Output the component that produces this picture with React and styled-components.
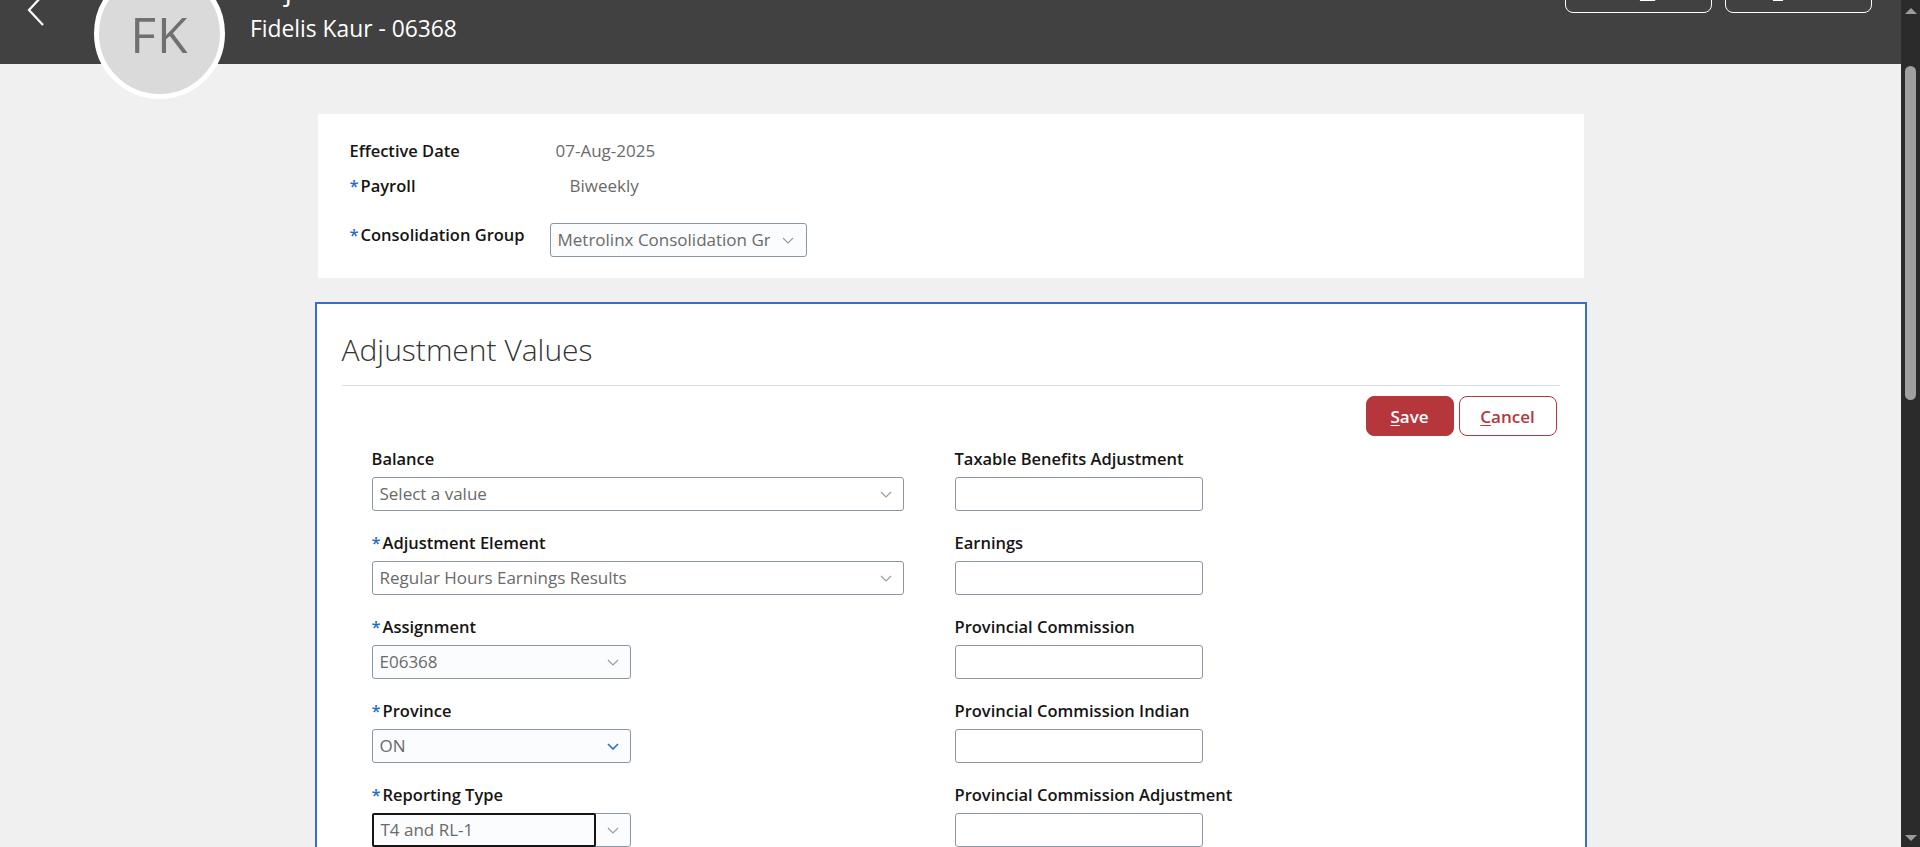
import React from 'react';
import styled, { createGlobalStyle } from 'styled-components';

const GlobalStyle = createGlobalStyle`
  html, body {
    margin: 0;
    padding: 0;
    height: 100%;
    overflow: hidden;
  }
  body {
    font-family: "Open Sans", "Noto Sans", sans-serif;
    background: #f0f0f0;
    color: #161513;
  }
  * { box-sizing: border-box; }
`;

const Viewport = styled.div`
  display: flex;
  width: 1920px;
  height: 847px;
  overflow: hidden;
`;

const Main = styled.div`
  flex: 1;
  min-width: 0;
  display: flex;
  flex-direction: column;
  overflow: hidden;
`;

/* ---------- fake window scrollbar ---------- */

const ScrollTrack = styled.div`
  width: 19px;
  flex-shrink: 0;
  background: #2b2b2b;
  display: flex;
  flex-direction: column;
  align-items: center;
  padding-top: 8px;
`;

const Arrow = styled.div`
  width: 0;
  height: 0;
  border-left: 6px solid transparent;
  border-right: 6px solid transparent;
  border-bottom: 6px solid #9b9b9b;
  ${(p) => p.$down && 'border-bottom: 0; border-top: 6px solid #9b9b9b; margin-top: auto; margin-bottom: 6px;'}
`;

const Thumb = styled.div`
  width: 11px;
  height: 334px;
  margin-top: 52px;
  border-radius: 6px;
  background: #a0a0a0;
`;

/* ---------- header ---------- */

const Header = styled.header`
  flex-shrink: 0;
  height: 104px;
  margin-top: -40px;
  background: #414141;
  display: flex;
  align-items: flex-start;
  padding: 0 29px 0 27px;
  position: relative;
  z-index: 2;
`;

const BackButton = styled.div`
  margin-top: 34px;
  width: 18px;
  height: 32px;
  color: #fff;
`;

const Avatar = styled.div`
  margin-top: 8px;
  margin-left: 49px;
  width: 131px;
  height: 131px;
  flex-shrink: 0;
  border-radius: 50%;
  border: 5px solid #fff;
  background: #dadada;
  color: #707070;
  font-size: 50px;
  display: flex;
  align-items: center;
  justify-content: center;
  letter-spacing: 1px;
`;

const TitleBlock = styled.div`
  margin-left: 25px;
  margin-top: 12px;
  display: flex;
  flex-direction: column;
  color: #fff;
`;

const PageTitle = styled.div`
  font-size: 28px;
  line-height: 34px;
`;

const PersonName = styled.div`
  margin-top: 8px;
  font-size: 22.8px;
  line-height: 30px;
`;

const HeaderActions = styled.div`
  margin-left: auto;
  margin-top: 17px;
  display: flex;
  gap: 13px;
`;

const GhostButton = styled.div`
  width: 147px;
  height: 36px;
  padding-bottom: 9px;
  border: 1px solid #fff;
  border-radius: 8px;
  color: #fff;
  font-size: 16px;
  font-weight: 600;
  display: flex;
  align-items: center;
  justify-content: center;
`;

const Key = styled.span`
  text-decoration: underline;
  text-underline-offset: ${(p) => p.$offset || 2}px;
`;

/* ---------- body ---------- */

const Content = styled.div`
  display: flex;
  flex-direction: column;
  align-items: center;
  padding-top: 50px;
  gap: 24px;
`;

const SummaryCard = styled.section`
  width: 1266px;
  height: 164px;
  background: #fff;
  padding: 27px 32px 0;
  display: grid;
  grid-template-columns: 200px 1fr;
  grid-template-rows: 35px 47px auto;
  align-items: start;
`;

const Label = styled.div`
  font-size: 16.5px;
  font-weight: 600;
  line-height: 20px;
  color: #161513;
  white-space: nowrap;
`;

const Req = styled.span`
  color: #1f6fc5;
  margin-right: 2px;
`;

const ReadValue = styled.div`
  font-size: 17px;
  line-height: 20px;
  color: #6a6a6a;
  padding-left: ${(p) => p.$indent || 6}px;
`;

const FormCard = styled.section`
  width: 1272px;
  flex-shrink: 0;
  background: #fff;
  border: 2px solid #3b6ec2;
  padding: 0 25px 40px;
`;

const CardTitle = styled.h2`
  margin: 0;
  padding: 26px 0 15px;
  font-size: 30px;
  font-weight: 300;
  line-height: 40px;
  color: #333;
  border-bottom: 1px solid #d6dfe7;
`;

const ButtonBar = styled.div`
  display: flex;
  justify-content: flex-end;
  gap: 5px;
  padding: 10px 3px 0 0;
`;

const ActionButton = styled.button`
  width: ${(p) => (p.$primary ? 88 : 98)}px;
  height: 40px;
  padding: 0;
  border-radius: 8px;
  font-family: inherit;
  font-size: 17px;
  font-weight: 600;
  border: 1px solid #b5373c;
  background: ${(p) => (p.$primary ? '#b5373c' : '#fff')};
  color: ${(p) => (p.$primary ? '#fff' : '#b5373c')};
`;

const FormGrid = styled.div`
  margin-top: 13px;
  padding-left: 30px;
  display: grid;
  grid-template-columns: 583px 248px;
  row-gap: 22px;
`;

const Field = styled.div`
  display: flex;
  flex-direction: column;
  gap: 8px;
`;

const SelectBox = styled.div`
  width: ${(p) => p.$width}px;
  height: 34px;
  border: 1px solid #8a97a3;
  border-radius: 3px;
  background: ${(p) => (p.$tinted ? '#fafcfe' : '#fff')};
  display: flex;
  align-items: stretch;
`;

const SelectText = styled.div`
  flex: 1;
  min-width: 0;
  overflow: hidden;
  white-space: nowrap;
  padding-left: 7px;
  font-size: 17px;
  line-height: 32px;
  color: #6a6a6a;
  border-radius: 2px;
  ${(p) =>
    p.$focused &&
    `
    margin: -1px 0 -1px -1px;
    border: 2px solid #161513;
    line-height: 30px;
    padding-left: 7px;
  `}
`;

const ChevronCell = styled.div`
  width: ${(p) => p.$w || 34}px;
  flex-shrink: 0;
  display: flex;
  align-items: center;
  justify-content: center;
  color: ${(p) => (p.$active ? '#2a6fbf' : '#9a9a9a')};
`;

const TextInput = styled.div`
  width: 248px;
  height: 34px;
  border: 1px solid #8a97a3;
  border-radius: 3px;
  background: #fff;
`;

function Chevron({ strong }) {
  return (
    <svg width="12" height="7" viewBox="0 0 12 7" fill="none">
      <path d="M1 1 L6 6 L11 1" stroke="currentColor" strokeWidth={strong ? 1.6 : 1.1} />
    </svg>
  );
}

function Select({ value, width, tinted, active, focused, chevronWidth }) {
  return (
    <SelectBox $width={width} $tinted={tinted}>
      <SelectText $focused={focused}>{value}</SelectText>
      <ChevronCell $active={active} $w={chevronWidth}>
        <Chevron strong={active} />
      </ChevronCell>
    </SelectBox>
  );
}

function FieldLabel({ required, children }) {
  return (
    <Label>
      {required && <Req>*</Req>}
      {children}
    </Label>
  );
}

const leftFields = [
  { label: 'Balance', value: 'Select a value', width: 532 },
  { label: 'Adjustment Element', required: true, value: 'Regular Hours Earnings Results', width: 532 },
  { label: 'Assignment', required: true, value: 'E06368', width: 259, tinted: true },
  { label: 'Province', required: true, value: 'ON', width: 259, tinted: true, active: true },
  { label: 'Reporting Type', required: true, value: 'T4 and RL-1', width: 259, tinted: true, focused: true },
];

const rightFields = [
  'Taxable Benefits Adjustment',
  'Earnings',
  'Provincial Commission',
  'Provincial Commission Indian',
  'Provincial Commission Adjustment',
];

function App() {
  return (
    <Viewport>
      <GlobalStyle />
      <Main>
        <Header>
          <BackButton>
            <svg width="18" height="32" viewBox="0 0 18 32" fill="none">
              <path d="M16 1 L2 16 L16 31" stroke="currentColor" strokeWidth="2.2" />
            </svg>
          </BackButton>
          <Avatar>FK</Avatar>
          <TitleBlock>
            <PageTitle>Adjust Balance</PageTitle>
            <PersonName>Fidelis Kaur - 06368</PersonName>
          </TitleBlock>
          <HeaderActions>
            <GhostButton>
              Sub<Key $offset={3}>m</Key>it
            </GhostButton>
            <GhostButton>
              <Key $offset={3}>C</Key>ancel
            </GhostButton>
          </HeaderActions>
        </Header>

        <Content>
          <SummaryCard>
            <Label>Effective Date</Label>
            <ReadValue>07-Aug-2025</ReadValue>
            <FieldLabel required>Payroll</FieldLabel>
            <ReadValue $indent={20}>Biweekly</ReadValue>
            <Label style={{ marginTop: 2 }}>
              <Req>*</Req>Consolidation Group
            </Label>
            <Select value="Metrolinx Consolidation Group" width={257} tinted chevronWidth={36} />
          </SummaryCard>

          <FormCard>
            <CardTitle>Adjustment Values</CardTitle>
            <ButtonBar>
              <ActionButton $primary>
                <Key>S</Key>ave
              </ActionButton>
              <ActionButton>
                <Key>C</Key>ancel
              </ActionButton>
            </ButtonBar>
            <FormGrid>
              {leftFields.map((f, i) => (
                <React.Fragment key={f.label}>
                  <Field>
                    <FieldLabel required={f.required}>{f.label}</FieldLabel>
                    <Select
                      value={f.value}
                      width={f.width}
                      tinted={f.tinted}
                      active={f.active}
                      focused={f.focused}
                    />
                  </Field>
                  <Field>
                    <FieldLabel>{rightFields[i]}</FieldLabel>
                    <TextInput />
                  </Field>
                </React.Fragment>
              ))}
            </FormGrid>
          </FormCard>
        </Content>
      </Main>
      <ScrollTrack>
        <Arrow />
        <Thumb />
        <Arrow $down />
      </ScrollTrack>
    </Viewport>
  );
}

export default App;
